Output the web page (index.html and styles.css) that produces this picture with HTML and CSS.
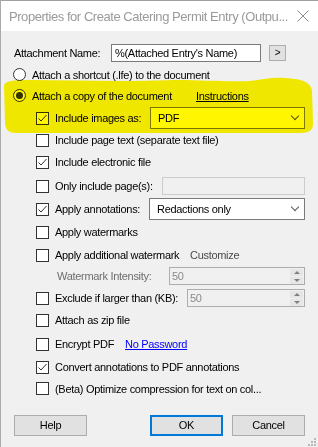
FILE: index.html
```html
<!DOCTYPE html>
<html>
<head>
    <title>Properties for Create Catering Permit Entry</title>
    <link rel="stylesheet" href="styles.css">
</head>
<body>
    <div class="window">
        <div class="titlebar">
            <span class="title">Properties for Create Catering Permit Entry (Outpu...</span>
            <svg class="close" width="12" height="12" viewBox="0 0 12 12">
                <path d="M0.5 0.5 L11.5 11.5 M11.5 0.5 L0.5 11.5" stroke="#8c8c8c" stroke-width="1" fill="none"/>
            </svg>
        </div>

        <div class="content">
            <div class="name-row">
                <span class="name-label">Attachment Name:</span>
                <div class="textbox name-box">%(Attached Entry's Name)</div>
                <div class="small-btn">&gt;</div>
            </div>

            <div class="radio-row">
                <span class="radio"></span>
                <span>Attach a shortcut (.lfe) to the document</span>
            </div>
            <div class="radio-row">
                <span class="radio checked"></span>
                <span class="copy-label">Attach a copy of the document</span>
                <span class="link-black">Instructions</span>
            </div>

            <div class="options">
                <div class="row">
                    <span class="check on"></span>
                    <span class="opt-label w-images">Include images as:</span>
                    <div class="combo combo-images"><span>PDF</span><span class="chev"></span></div>
                </div>
                <div class="row">
                    <span class="check"></span>
                    <span>Include page text (separate text file)</span>
                </div>
                <div class="row">
                    <span class="check on"></span>
                    <span>Include electronic file</span>
                </div>
                <div class="row mt2">
                    <span class="check"></span>
                    <span class="opt-label w-pages">Only include page(s):</span>
                    <div class="textbox disabled pages-box"></div>
                </div>
                <div class="row mt1">
                    <span class="check on"></span>
                    <span class="opt-label w-annot">Apply annotations:</span>
                    <div class="combo combo-annot"><span>Redactions only</span><span class="chev"></span></div>
                </div>
                <div class="row mt1">
                    <span class="check"></span>
                    <span>Apply watermarks</span>
                </div>
                <div class="row mt1">
                    <span class="check"></span>
                    <span class="opt-label w-addl">Apply additional watermark</span>
                    <span class="grey-link">Customize</span>
                </div>
                <div class="row row-spin mt1">
                    <span class="opt-label w-intensity muted">Watermark Intensity:</span>
                    <div class="spin spin-intensity">
                        <span class="spin-value">50</span>
                        <span class="spin-btns"><span class="up"></span><span class="down"></span></span>
                    </div>
                </div>
                <div class="row mt2">
                    <span class="check"></span>
                    <span class="opt-label w-exclude">Exclude if larger than (KB):</span>
                    <div class="spin spin-exclude">
                        <span class="spin-value">50</span>
                        <span class="spin-btns"><span class="up"></span><span class="down"></span></span>
                    </div>
                </div>
                <div class="row">
                    <span class="check"></span>
                    <span>Attach as zip file</span>
                </div>
                <div class="row mt2">
                    <span class="check"></span>
                    <span class="opt-label w-encrypt">Encrypt PDF</span>
                    <span class="link-blue">No Password</span>
                </div>
                <div class="row mt1">
                    <span class="check on"></span>
                    <span>Convert annotations to PDF annotations</span>
                </div>
                <div class="row row-last">
                    <span class="check"></span>
                    <span>(Beta) Optimize compression for text on col...</span>
                </div>
            </div>

            <div class="buttons">
                <div class="btn">Help</div>
                <div class="btn btn-default">OK</div>
                <div class="btn">Cancel</div>
            </div>
        </div>

        <!-- highlighter stroke drawn over the dialog -->
        <svg class="highlight" width="318" height="447" viewBox="0 0 318 447">
            <path d="M4 86 C4 81 12 80 30 80 L120 81 C150 81 165 80 180 80 C200 80 230 82 250 81 C262 80 270 77 285 78 C300 79 310 81 312 90 L313 124 C313 130 309 133 300 133 L16 133 C9 133 5 130 5 122 Z" fill="#fff600"/>
        </svg>

        <svg class="grip" width="8" height="8" viewBox="0 0 8 8">
            <rect x="6" y="0" width="2" height="2" fill="#b8b8b8"/>
            <rect x="3" y="3" width="2" height="2" fill="#b8b8b8"/>
            <rect x="6" y="3" width="2" height="2" fill="#b8b8b8"/>
            <rect x="0" y="6" width="2" height="2" fill="#b8b8b8"/>
            <rect x="3" y="6" width="2" height="2" fill="#b8b8b8"/>
            <rect x="6" y="6" width="2" height="2" fill="#b8b8b8"/>
        </svg>
    </div>
</body>
</html>
```

FILE: styles.css
```css
body {
    margin: 0;
    font-family: "Liberation Sans", Arial, sans-serif;
    font-size: 11px;
    letter-spacing: -0.3px;
    color: #000;
}
.window {
    position: relative;
    width: 318px;
    height: 447px;
    box-sizing: border-box;
    border-top: 1px solid #a0a0a0;
    border-left: 1px solid #aaaaaa;
    background: #f0f0f0;
    overflow: hidden;
}
.titlebar {
    height: 30px;
    background: #fff;
    display: flex;
    align-items: center;
    justify-content: space-between;
    padding: 0 9px 0 8px;
}
.title {
    color: #9a9a9a;
    font-size: 13px;
    letter-spacing: -0.45px;
    white-space: nowrap;
}
.close {
    display: block;
    flex: none;
}
.content {
    padding: 11px 13px 0 13px;
}
.name-row {
    height: 22px;
    display: flex;
    align-items: center;
}
.name-label {
    width: 97px;
}
.textbox {
    box-sizing: border-box;
    height: 18px;
    border: 1px solid #7a7a7a;
    background: #fff;
    padding-left: 3px;
    line-height: 16px;
}
.name-box {
    width: 150px;
}
.small-btn {
    box-sizing: border-box;
    width: 17px;
    height: 16px;
    margin-left: 8px;
    background: #e1e1e1;
    border: 1px solid #adadad;
    text-align: center;
    line-height: 14px;
    font-size: 10px;
}
.radio-row {
    height: 21px;
    display: flex;
    align-items: center;
}
.radio {
    box-sizing: border-box;
    width: 13px;
    height: 13px;
    margin-left: -1px;
    margin-right: 6px;
    border: 1px solid #333;
    border-radius: 50%;
    background: #fff;
    display: flex;
    align-items: center;
    justify-content: center;
}
.radio.checked::after {
    content: "";
    width: 7px;
    height: 7px;
    border-radius: 50%;
    background: #333;
}
.copy-label {
    width: 164px;
}
.link-black {
    text-decoration: underline;
}
.options {
    margin-top: 1px;
}
.row {
    height: 22px;
    display: flex;
    align-items: center;
    padding-left: 22px;
}
.mt1 { margin-top: 1px; }
.mt2 { margin-top: 2px; }
.row-spin {
    height: 18px;
    padding-left: 43px;
}
.row-last {
    height: 21px;
}
.check {
    box-sizing: border-box;
    width: 13px;
    height: 13px;
    margin-right: 6px;
    border: 1px solid #333;
    background: #fff;
    flex: none;
}
.check.on {
    background: #fff url("data:image/svg+xml;utf8,<svg xmlns='http://www.w3.org/2000/svg' width='11' height='11' viewBox='0 0 11 11'><polyline points='1.5,5.5 4,8 9.5,2' fill='none' stroke='%23333' stroke-width='1'/></svg>") no-repeat center;
}
.opt-label {
    flex: none;
    white-space: nowrap;
}
.w-images { width: 95px; }
.w-pages { width: 107px; }
.w-annot { width: 94px; }
.w-addl { width: 135px; }
.w-intensity { width: 112px; }
.w-exclude { width: 132px; }
.w-encrypt { width: 70px; }
.muted {
    color: #6d6d6d;
}
.grey-link {
    color: #4a4a4a;
}
.link-blue {
    color: #0000ff;
    text-decoration: underline;
}
.combo {
    box-sizing: border-box;
    height: 22px;
    border: 1px solid #7a7a7a;
    background: #fff;
    display: flex;
    align-items: center;
    justify-content: space-between;
    padding: 0 6px 0 7px;
}
.combo-images { width: 155px; }
.combo-annot { width: 156px; padding-left: 7px; }
.chev {
    width: 5px;
    height: 5px;
    border-right: 1px solid #555;
    border-bottom: 1px solid #555;
    transform: rotate(45deg);
    margin-top: -4px;
}
.disabled {
    background: #f0f0f0;
    border-color: #cccccc;
}
.pages-box {
    width: 143px;
}
.spin {
    box-sizing: border-box;
    height: 18px;
    border: 1px solid #adadad;
    background: #f0f0f0;
    display: flex;
    align-items: center;
    justify-content: space-between;
    padding: 0 1px 0 2px;
    color: #8a8a8a;
}
.spin-intensity { width: 136px; }
.spin-exclude { width: 118px; }
.spin-btns {
    display: flex;
    flex-direction: column;
    gap: 1px;
}
.spin-btns span {
    width: 13px;
    height: 7px;
    background: #e6e6e6;
    display: flex;
    align-items: center;
    justify-content: center;
}
.spin-btns .up::after {
    content: "";
    border-left: 3px solid transparent;
    border-right: 3px solid transparent;
    border-bottom: 3px solid #808080;
}
.spin-btns .down::after {
    content: "";
    border-left: 3px solid transparent;
    border-right: 3px solid transparent;
    border-top: 3px solid #808080;
}
.buttons {
    margin-top: 16px;
    display: flex;
    gap: 9px;
}
.btn {
    box-sizing: border-box;
    width: 73px;
    height: 21px;
    background: #e1e1e1;
    border: 1px solid #adadad;
    text-align: center;
    line-height: 19px;
}
.btn-default {
    margin-left: auto;
    border: 2px solid #0078d7;
    line-height: 17px;
}
.highlight {
    position: absolute;
    left: -1px;
    top: -1px;
    mix-blend-mode: multiply;
    pointer-events: none;
}
.grip {
    position: absolute;
    right: 2px;
    bottom: 1px;
}
```
